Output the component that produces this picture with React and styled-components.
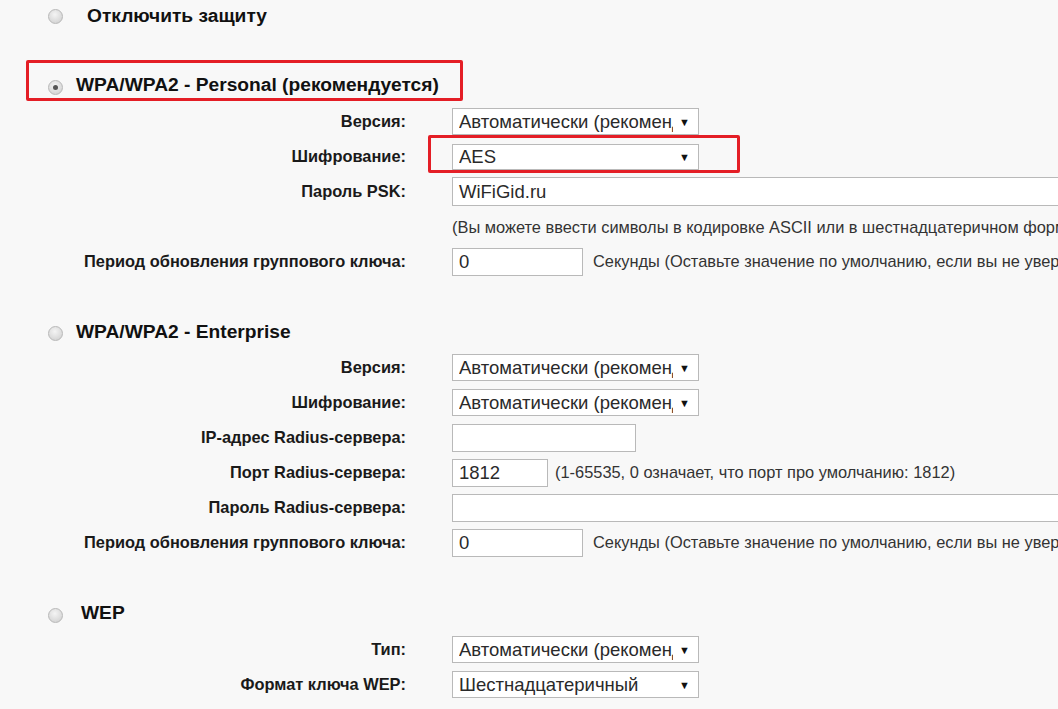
import styled, { createGlobalStyle } from "styled-components"

const GlobalStyle = createGlobalStyle`
    html, body {
        margin: 0;
        padding: 0;
        background: #f8f8f8;
        overflow: hidden;
    }
    body {
        font-family: "Liberation Sans", Arial, sans-serif;
        color: #1a1a1a;
    }
`

const Page = styled.div`
    width: 1058px;
    height: 709px;
    overflow: hidden;
    background: #f8f8f8;
`

const Heading = styled.div`
    display: flex;
    align-items: center;
    height: 32px;
    margin-top: ${(p) => p.$top || 0}px;
    padding-left: 48px;
    gap: ${(p) => p.$gap || 13}px;
    font-size: 19.2px;
    font-weight: bold;
    color: #111;
    white-space: nowrap;
`

const MarkedHeading = styled.div`
    display: flex;
    align-items: center;
    box-sizing: border-box;
    width: 437px;
    height: 41px;
    margin: 28px 0 0 26px;
    padding: 9px 0 0 19px;
    gap: 13px;
    border: 3px solid #e41e26;
    border-radius: 2px;
    font-size: 19.2px;
    font-weight: bold;
    color: #111;
    white-space: nowrap;
`

const Radio = styled.span`
    position: relative;
    flex: none;
    width: 13px;
    height: 13px;
    margin-top: ${(p) => p.$drop || 0}px;
    border-radius: 50%;
    border: 1px solid #b8b8b8;
    background: radial-gradient(circle at 45% 35%, #f4f4f4 0%, #dcdcdc 60%, #cacaca 100%);
    ${(p) =>
        p.$checked &&
        `&::after {
            content: "";
            position: absolute;
            left: 4px;
            top: 4px;
            width: 5px;
            height: 5px;
            border-radius: 50%;
            background: #555;
        }`}
`

const Rows = styled.div`
    display: grid;
    grid-template-columns: 406px 1fr;
    grid-auto-rows: 35px;
    column-gap: 46px;
    margin-top: ${(p) => p.$top || 0}px;
`

const Label = styled.div`
    display: flex;
    align-items: center;
    justify-content: flex-end;
    font-size: 16.4px;
    font-weight: bold;
    color: #1a1a1a;
    white-space: nowrap;
`

const Field = styled.div`
    display: flex;
    align-items: center;
    gap: ${(p) => p.$gap || 10}px;
    white-space: nowrap;
    min-width: 0;
`

const Input = styled.div`
    flex: none;
    box-sizing: border-box;
    width: ${(p) => p.$w}px;
    height: ${(p) => p.$h || 28}px;
    padding-left: 6px;
    display: flex;
    align-items: center;
    background: #fff;
    border: 1px solid #b9b9b9;
    font-size: 18.5px;
    color: #2a2a2a;
`

const Select = styled.div`
    flex: none;
    box-sizing: border-box;
    width: 247px;
    height: ${(p) => p.$h || 27}px;
    padding: 0 8px 0 6px;
    display: flex;
    align-items: center;
    background: #fff;
    border: 1px solid #b9b9b9;
    font-size: 18.5px;
    color: #2a2a2a;
`

const SelectText = styled.span`
    flex: 1;
    overflow: hidden;
    white-space: nowrap;
`

const Arrow = styled.span`
    flex: none;
    margin-left: 6px;
    font-size: 11px;
    color: #111;
`

const Marker = styled.div`
    display: flex;
    align-items: flex-end;
    box-sizing: border-box;
    width: 312px;
    height: 38px;
    margin: -6px 0 0 -24px;
    padding: 0 0 0 21px;
    border: 3px solid #e41e26;
    border-radius: 2px;
`

const Note = styled.span`
    font-size: 16.4px;
    color: #333;
`

const HintRow = styled.div`
    grid-column: 2;
    display: flex;
    align-items: center;
    padding-top: 2px;
    font-size: 16.4px;
    color: #333;
    white-space: nowrap;
`

const Dropdown = ({ children, h }) => (
    <Select $h={h}>
        <SelectText>{children}</SelectText>
        <Arrow>▼</Arrow>
    </Select>
)

const AUTO = "Автоматически (рекомендуется)"
const SECONDS = "Секунды (Оставьте значение по умолчанию, если вы не уверены)"

const App = () => {
    return (
        <Page>
            <GlobalStyle />
            <Heading $gap={24}>
                <Radio />
                Отключить защиту
            </Heading>

            <MarkedHeading>
                <Radio $checked $drop={4} />
                WPA/WPA2 - Personal (рекомендуется)
            </MarkedHeading>
            <Rows $top={3}>
                <Label>Версия:</Label>
                <Field><Dropdown>{AUTO}</Dropdown></Field>
                <Label>Шифрование:</Label>
                <Field>
                    <Marker><Dropdown h={26}>AES</Dropdown></Marker>
                </Field>
                <Label>Пароль PSK:</Label>
                <Field><Input $w={640} $h={29}>WiFiGid.ru</Input></Field>
                <HintRow>(Вы можете ввести символы в кодировке ASCII или в шестнадцатеричном формате)</HintRow>
                <Label>Период обновления группового ключа:</Label>
                <Field><Input $w={131}>0</Input><Note>{SECONDS}</Note></Field>
            </Rows>

            <Heading $top={37}>
                <Radio $drop={2} />
                WPA/WPA2 - Enterprise
            </Heading>
            <Rows $top={2}>
                <Label>Версия:</Label>
                <Field><Dropdown>{AUTO}</Dropdown></Field>
                <Label>Шифрование:</Label>
                <Field><Dropdown>{AUTO}</Dropdown></Field>
                <Label>IP-адрес Radius-сервера:</Label>
                <Field><Input $w={184} /></Field>
                <Label>Порт Radius-сервера:</Label>
                <Field $gap={7}><Input $w={96}>1812</Input><Note>(1-65535, 0 означает, что порт про умолчанию: 1812)</Note></Field>
                <Label>Пароль Radius-сервера:</Label>
                <Field><Input $w={640} /></Field>
                <Label>Период обновления группового ключа:</Label>
                <Field><Input $w={131}>0</Input><Note>{SECONDS}</Note></Field>
            </Rows>

            <Heading $top={37} $gap={18}>
                <Radio $drop={4} />
                WEP
            </Heading>
            <Rows $top={3}>
                <Label>Тип:</Label>
                <Field><Dropdown>{AUTO}</Dropdown></Field>
                <Label>Формат ключа WEP:</Label>
                <Field><Dropdown>Шестнадцатеричный</Dropdown></Field>
            </Rows>
        </Page>
    )
}

export default App
